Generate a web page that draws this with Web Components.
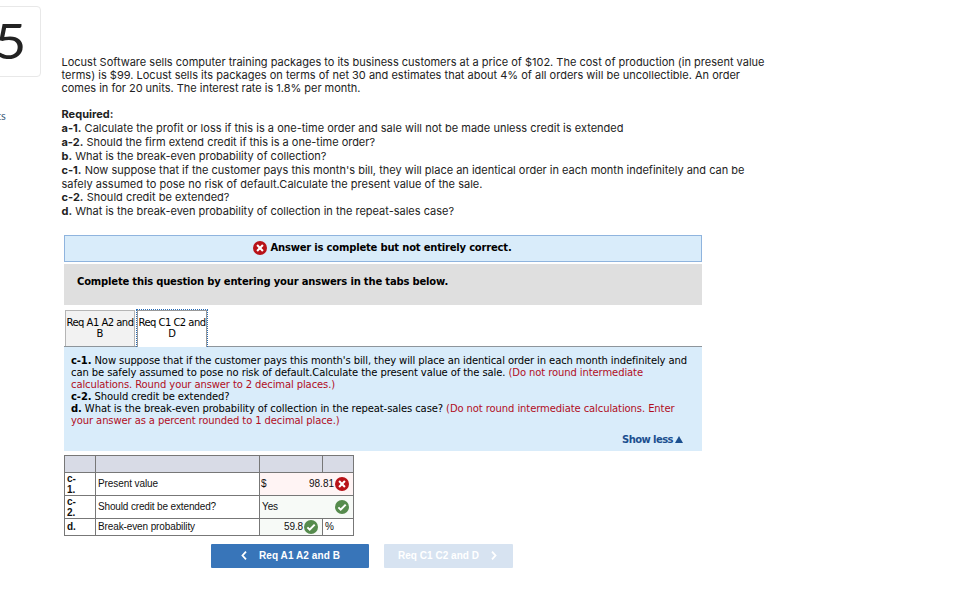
<!DOCTYPE html>
<html lang="en">
<head>
<meta charset="utf-8">
<title>Question 5</title>
<style>
  body {
    margin: 0;
    width: 963px;
    height: 598px;
    overflow: hidden;
    background: #fff;
    color: #000;
    font: 10px "DejaVu Sans", sans-serif;
  }

  b {
    font-weight: 700;
  }

  em {
    font-style: normal;
    color: #b10e1e;
  }
</style>
</head>
<body>
<quiz-page>
  <question-number slot="side" label="ts">5</question-number>
  <question-text>
    <fit-line w="703">Locust Software sells computer training packages to its business customers at a price of $102. The cost of production (in present value</fit-line>
    <fit-line w="678.5">terms) is $99. Locust sells its packages on terms of net 30 and estimates that about 4% of all orders will be uncollectible. An order</fit-line>
    <fit-line w="299" style="margin-bottom:12px">comes in for 20 units. The interest rate is 1.8% per month.</fit-line>
    <fit-line w="52" h="14"><b>Required:</b></fit-line>
    <fit-line w="562" h="14"><b>a-1.</b> Calculate the profit or loss if this is a one-time order and sale will not be made unless credit is extended</fit-line>
    <fit-line w="313.5" h="14"><b>a-2.</b> Should the firm extend credit if this is a one-time order?</fit-line>
    <fit-line w="265" h="14"><b>b.</b> What is the break-even probability of collection?</fit-line>
    <fit-line w="683" h="14"><b>c-1.</b> Now suppose that if the customer pays this month's bill, they will place an identical order in each month indefinitely and can be</fit-line>
    <fit-line w="421" h="14">safely assumed to pose no risk of default.Calculate the present value of the sale.</fit-line>
    <fit-line w="168" h="13"><b>c-2.</b> Should credit be extended?</fit-line>
    <fit-line w="392.5" h="14"><b>d.</b> What is the break-even probability of collection in the repeat-sales case?</fit-line>
  </question-text>
  <result-banner><fit-line w="241" h="14">Answer is complete but not entirely correct.</fit-line></result-banner>
  <tab-hint><fit-line w="371" h="14">Complete this question by entering your answers in the tabs below.</fit-line></tab-hint>
  <tab-strip>
    <req-tab><fit-line w="67" h="11">Req A1 A2 and</fit-line><fit-line h="11">B</fit-line></req-tab>
    <req-tab active><fit-line w="67" h="11">Req C1 C2 and</fit-line><fit-line h="11">D</fit-line></req-tab>
  </tab-strip>
  <req-panel>
    <fit-line w="616" h="12"><b>c-1.</b> Now suppose that if the customer pays this month's bill, they will place an identical order in each month indefinitely and</fit-line>
    <fit-line w="572" h="12">can be safely assumed to pose no risk of default.Calculate the present value of the sale. <em>(Do not round intermediate</em></fit-line>
    <fit-line w="264" h="12"><em>calculations. Round your answer to 2 decimal places.)</em></fit-line>
    <fit-line w="158.5" h="12"><b>c-2.</b> Should credit be extended?</fit-line>
    <fit-line w="603.5" h="12"><b>d.</b> What is the break-even probability of collection in the repeat-sales case? <em>(Do not round intermediate calculations. Enter</em></fit-line>
    <fit-line w="268.5" h="12"><em>your answer as a percent rounded to 1 decimal place.)</em></fit-line>
    <fit-line slot="toggle" w="51" h="12">Show less</fit-line>
  </req-panel>
  <answer-table></answer-table>
  <nav-buttons>
    <nav-button dir="prev" style="width:158px"><fit-line w="81" h="14">Req A1 A2 and B</fit-line></nav-button>
    <nav-button dir="next" disabled style="width:129px"><fit-line w="81" h="14">Req C1 C2 and D</fit-line></nav-button>
  </nav-buttons>
</quiz-page>

<script>
const define = (name, html, setup) => {
  const template = document.createElement("template");
  template.innerHTML = html;
  customElements.define(name, class extends HTMLElement {
    connectedCallback() {
      if (!this.shadowRoot) {
        this.attachShadow({ mode: "open" }).appendChild(template.content.cloneNode(true));
        if (setup) setup(this);
      }
    }
  });
};

define("quiz-page", `
  <style>
    :host { display: grid; grid-template-columns: 61px 1fr; }
    main { display: flex; flex-direction: column; align-items: flex-start; padding-top: 56px; }
  </style>
  <slot name="side"></slot>
  <main><slot></slot></main>
`);

define("question-number", `
  <style>
    :host { display: block; overflow: hidden; }
    .box {
      display: flex;
      justify-content: flex-end;
      width: 57px;
      height: 69px;
      margin: 6px 0 0 -18px;
      border: 1px solid #e8e8e8;
      border-radius: 4px;
      font: 49px/66px Lato, sans-serif;
      color: #222;
    }
    .box span {
      margin-right: 14px;
      transform: scaleX(1.13);
      transform-origin: right;
    }
    .label {
      margin: 32px 0 0 -3px;
      font: 11px/13px Lato, sans-serif;
      color: #3a5a78;
    }
  </style>
  <div class="box"><span><slot></slot></span></div>
  <div class="label"></div>
`, el => {
  el.shadowRoot.querySelector(".label").textContent = el.getAttribute("label");
});

define("question-text", `
  <style>
    :host {
      display: block;
      height: 179px;
      padding-left: .5px;
      font: 11px Inter, sans-serif;
      color: #222;
    }
  </style>
  <slot></slot>
`);

// one line of text, letter-spaced to the width given in "w"
define("fit-line", `
  <style>
    :host { display: block; white-space: nowrap; line-height: 13px; }
    span { display: inline-block; white-space: nowrap; }
  </style>
  <span><slot></slot></span>
`);

define("status-icon", `
  <style>
    :host { display: block; width: 14px; height: 14px; flex: none; }
    svg { display: block; width: 100%; height: 100%; }
    .ok, :host([ok]) .bad { display: none; }
    :host([ok]) .ok { display: block; }
  </style>
  <svg class="bad" viewBox="0 0 14 14"><circle cx="7" cy="7" r="7" fill="#b81218"/><path d="M4.100 4.100l5.800 5.800M9.900 4.100L4.100 9.900" stroke="#fff" stroke-width="2.100"/></svg>
  <svg class="ok" viewBox="0 0 14 14"><circle cx="7" cy="7" r="7" fill="#568b4d"/><path d="M3.400 7.400l2.300 2.200 5-5" fill="none" stroke="#fff" stroke-width="2"/></svg>
`);

define("result-banner", `
  <style>
    :host {
      display: flex;
      align-items: center;
      justify-content: center;
      gap: 4px;
      box-sizing: border-box;
      width: 638px;
      height: 27px;
      margin-left: 3px;
      padding: 0 2px 1px 0;
      border: 1px solid #8fb4de;
      background: #d9ecfa;
      font-weight: 700;
    }
  </style>
  <status-icon></status-icon>
  <slot></slot>
`);

define("tab-hint", `
  <style>
    :host {
      display: block;
      box-sizing: border-box;
      width: 638px;
      height: 41px;
      margin: 2px 0 0 3px;
      padding: 11px 13px;
      background: #dfdfdf;
      font-weight: 700;
    }
  </style>
  <slot></slot>
`);

define("tab-strip", `
  <style>
    :host {
      display: flex;
      align-items: flex-end;
      gap: 1px;
      box-sizing: border-box;
      width: 638px;
      height: 42px;
      margin-left: 3px;
      padding-left: 1px;
      border-bottom: 1px solid #8e959b;
    }
  </style>
  <slot></slot>
`);

define("req-tab", `
  <style>
    :host {
      display: flex;
      flex-direction: column;
      align-items: center;
      box-sizing: border-box;
      width: 70px;
      height: 36px;
      padding-top: 6px;
      border: 1px solid #b5b5b5;
      border-bottom: 0;
      background: #f2f2f2;
    }
    :host([active]) {
      width: 72px;
      height: 38px;
      margin-bottom: -1px;
      padding-top: 7px;
      border: 1px dotted #2a6cb4;
      border-bottom: 0;
      background: #fff;
      box-shadow: inset 1px 1px #999, inset -1px 0 #999;
    }
  </style>
  <slot></slot>
`);

define("req-panel", `
  <style>
    :host {
      display: block;
      box-sizing: border-box;
      width: 638px;
      height: 104px;
      margin-left: 3px;
      padding: 8px 7px 0;
      background: #d9ecfa;
    }
    .toggle {
      display: flex;
      align-items: center;
      justify-content: flex-end;
      gap: 2px;
      margin-top: 7px;
      padding-right: 12px;
      font-weight: 700;
      color: #1b4f8f;
    }
    svg { width: 8px; height: 7px; margin-bottom: 1px; }
  </style>
  <slot></slot>
  <div class="toggle"><slot name="toggle"></slot><svg viewBox="0 0 8 7"><path d="M4 0l4 7H0z" fill="#1b4f8f"/></svg></div>
`);

define("answer-table", `
  <style>
    :host { display: block; margin: 4px 0 0 3px; font: 10px/11px "Liberation Sans", Arial, sans-serif; color: #111; }
    .grid {
      display: grid;
      grid-template-columns: 30px 163px 62px 30px;
      grid-template-rows: 16px 22px 22px 16px;
      gap: 1px;
      width: 288px;
      padding: 1px;
      background: #777;
    }
    .grid > div { display: flex; align-items: center; background: #fff; padding: 0 2px; }
    .grid > .head { background: #d8dbe6; }
    .grid > .bad { background: #fff4f4; }
    .grid > .good { background: #f7faf7; }
    .grid fit-line, .text { padding-bottom: 1px; }
    .wide { grid-column: span 2; justify-content: space-between; }
    .value { display: flex; align-items: center; gap: 1px; }
  </style>
  <div class="grid">
    <div class="head"></div><div class="head"></div><div class="head"></div><div class="head"></div>
    <div><b>c-<br>1.</b></div>
    <div><fit-line w="60">Present value</fit-line></div>
    <div class="wide bad" style="padding:0 4px 0 1px"><span class="text">$</span><span class="value"><fit-line w="25">98.81</fit-line><status-icon></status-icon></span></div>
    <div><b>c-<br>2.</b></div>
    <div><fit-line w="118">Should credit be extended?</fit-line></div>
    <div class="wide good" style="padding-right:4px"><fit-line w="16">Yes</fit-line><status-icon ok></status-icon></div>
    <div><b class="text">d.</b></div>
    <div><fit-line w="97">Break-even probability</fit-line></div>
    <div class="good" style="justify-content:flex-end;padding-right:4px"><span class="value"><fit-line w="19">59.8</fit-line><status-icon ok></status-icon></span></div>
    <div><span class="text">%</span></div>
  </div>
`);

define("nav-buttons", `
  <style>
    :host { display: flex; gap: 15px; margin: 8px 0 0 150px; }
  </style>
  <slot></slot>
`);

define("nav-button", `
  <style>
    :host {
      display: flex;
      align-items: center;
      justify-content: center;
      gap: 12px;
      box-sizing: border-box;
      height: 24px;
      padding-left: 1px;
      border-radius: 1px;
      background: #3875b9;
      color: #fff;
      font: 700 10px "Liberation Sans", Arial, sans-serif;
    }
    :host([disabled]) { padding: 0 2px 0 0; background: #d7e3f1; }
    svg { width: 6px; height: 9px; margin-bottom: 1px; }
    .next, :host([dir="next"]) .prev { display: none; }
    :host([dir="next"]) .next { display: block; }
  </style>
  <svg class="prev" viewBox="0 0 6 9"><path d="M5 .7L1.500 4.500 5 8.300" fill="none" stroke="#fff" stroke-width="1.800"/></svg>
  <slot></slot>
  <svg class="next" viewBox="0 0 6 9"><path d="M1 .7l3.500 3.800L1 8.300" fill="none" stroke="#fff" stroke-width="1.800"/></svg>
`);

const fitLines = root => {
  root.querySelectorAll("*").forEach(el => {
    if (el.localName === "fit-line") {
      const span = el.shadowRoot.querySelector("span");
      if (el.hasAttribute("h")) el.style.lineHeight = el.getAttribute("h") + "px";
      const w = parseFloat(el.getAttribute("w"));
      if (w) {
        const diff = w - span.getBoundingClientRect().width;
        span.style.letterSpacing = diff / el.textContent.length + "px";
      }
    } else if (el.shadowRoot) {
      fitLines(el.shadowRoot);
    }
  });
};
fitLines(document);
</script>
</body>
</html>
